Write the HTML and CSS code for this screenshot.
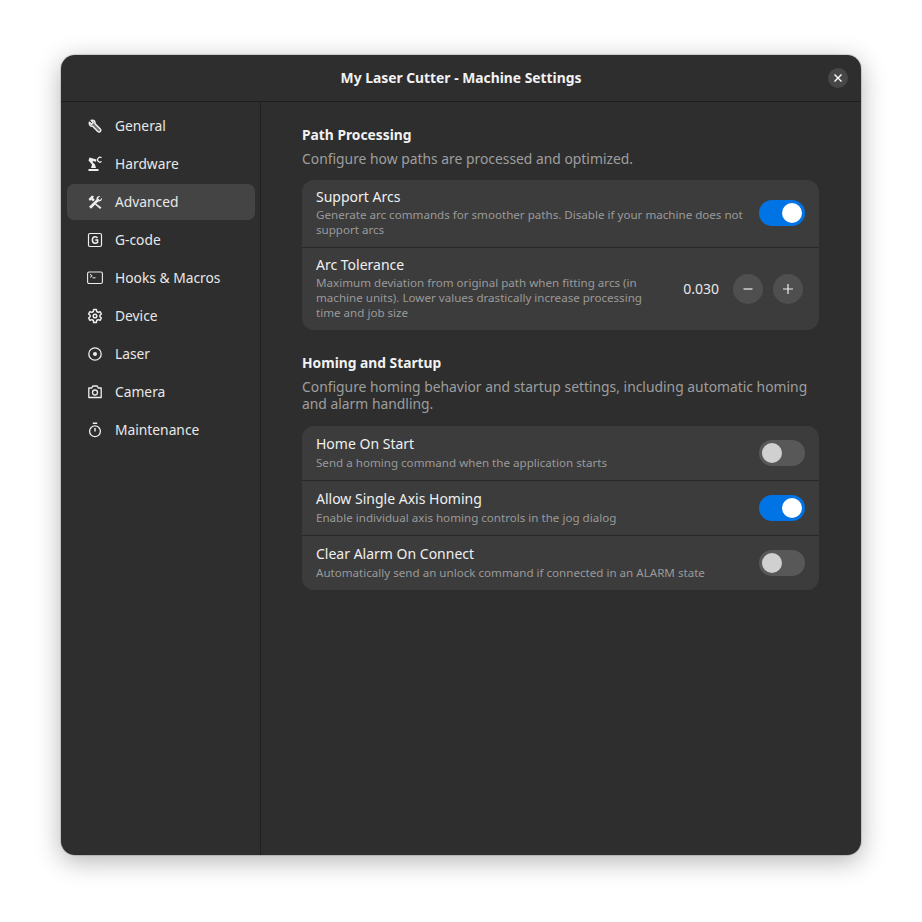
FILE: index.html
```html
<!DOCTYPE html>
<html lang="en">

<head>
    <meta charset="UTF-8">
    <meta name="viewport" content="width=device-width, initial-scale=1.0">
    <title>Machine Settings</title>
    <link rel="stylesheet" href="styles.css">
</head>

<body>
    <div class="window">
        <header class="titlebar">
            <span class="title">My Laser Cutter - Machine Settings</span>
            <button class="close-btn" aria-label="Close">
                <svg width="16" height="16" viewBox="0 0 16 16"><path d="M4.500 4.500l7 7M11.500 4.500l-7 7" stroke="#fff" stroke-width="1.400" fill="none"/></svg>
            </button>
        </header>

        <div class="main">
            <!-- Sidebar -->
            <nav class="sidebar">
                <a class="nav-item">
                    <svg class="nav-icon" viewBox="0 0 16 16"><path d="M2.400 4.200 4.500 6.200 6.200 4.500 4.200 2.400C5.800 1.700 7.700 2.600 8 4.300c.1.500.1 1 0 1.400l5.300 5.300c.7.700.7 1.500.1 2.200l-.4.400c-.7.600-1.500.6-2.200-.1L5.600 8.300C3.600 8.700 1.700 6.800 2.400 4.200z" stroke="#eee" stroke-width="1.500" fill="#eee" fill-opacity=".35" stroke-linejoin="round"/></svg>
                    <span>General</span>
                </a>
                <a class="nav-item">
                    <svg class="nav-icon" viewBox="0 0 16 16"><path d="M1.500 13h10v2h-10zM4 12 5 8.500 1.500 4.500 2.500 1.500 9.500 3.500 9 5.800 6 5 5.500 6 8 8.500 9 12z" fill="#eee"/><path d="M14.500 1.800a2.400 2.400 0 1 0 0 3.800" stroke="#eee" stroke-width="1.300" fill="none"/></svg>
                    <span>Hardware</span>
                </a>
                <a class="nav-item active">
                    <svg class="nav-icon" viewBox="0 0 16 16"><path d="M1.500 5 5 1.500 7 2.500 6 4 7.800 5.800 6 7.500 4.200 5.800 3 7z" fill="#eee"/><path d="M2 12.800 9.500 5.500c-.5-2 1.500-4 3.800-3.500L11 4.300l.7 1 1.300.7L15 3.800c.4 2.300-1.500 4-3.700 3.700L4 14.800z" fill="#eee"/><path d="M9 9.500 14.500 13.500 13 15 8 10.500z" fill="#eee"/></svg>
                    <span>Advanced</span>
                </a>
                <a class="nav-item">
                    <svg class="nav-icon" viewBox="0 0 16 16"><rect x="1.500" y="1.500" width="13" height="13" rx="1.500" stroke="#eee" stroke-width="1.200" fill="none"/><path d="M10.500 6.200C10 5.200 9.200 4.800 8.200 4.800 6.500 4.800 5.400 6.100 5.400 8s1 3.200 2.800 3.200c1 0 1.800-.3 2.400-.8V7.900H8.200" stroke="#eee" stroke-width="1.500" fill="none"/></svg>
                    <span>G-code</span>
                </a>
                <a class="nav-item">
                    <svg class="nav-icon" viewBox="0 0 16 14"><rect x=".6" y="1" width="14.800" height="11.500" rx="1.500" stroke="#eee" stroke-width="1.100" fill="none"/><path d="M3 3.200 5.200 4.800 3 6.300M5.500 6.800h3" stroke="#eee" stroke-width="1" fill="none"/></svg>
                    <span>Hooks &amp; Macros</span>
                </a>
                <a class="nav-item">
                    <svg class="nav-icon" viewBox="0 0 16 16"><path d="M6.700 1.500h2.600l.4 2 1.500.9 1.900-.7 1.300 2.300-1.500 1.300v1.400l1.500 1.300-1.300 2.300-1.900-.7-1.500.9-.4 2H6.700l-.4-2-1.500-.9-1.900.7-1.300-2.300 1.500-1.300V7.300L1.600 6l1.300-2.300 1.900.7 1.500-.9z" stroke="#eee" stroke-width="1.500" fill="none" stroke-linejoin="round"/><circle cx="8" cy="8" r="1.800" stroke="#eee" stroke-width="1.500" fill="none"/></svg>
                    <span>Device</span>
                </a>
                <a class="nav-item">
                    <svg class="nav-icon" viewBox="0 0 16 16"><circle cx="8" cy="8" r="6.200" stroke="#eee" stroke-width="1.300" fill="none"/><circle cx="8" cy="8" r="2" fill="#eee"/></svg>
                    <span>Laser</span>
                </a>
                <a class="nav-item">
                    <svg class="nav-icon" viewBox="0 0 16 16"><path d="M1.800 4h3l1-2h4.400l1 2h3v9.500H1.800z" stroke="#eee" stroke-width="1.300" fill="none" stroke-linejoin="round"/><circle cx="8" cy="8.500" r="2.500" stroke="#eee" stroke-width="1.300" fill="none"/></svg>
                    <span>Camera</span>
                </a>
                <a class="nav-item">
                    <svg class="nav-icon" viewBox="0 0 16 16"><circle cx="8" cy="9.300" r="5.400" stroke="#eee" stroke-width="1.300" fill="none"/><path d="M5.800 1.300h4.400M8 6v3.500" stroke="#eee" stroke-width="1.400" fill="none"/></svg>
                    <span>Maintenance</span>
                </a>
            </nav>

            <!-- Settings page -->
            <section class="content">
                <h2 class="group-title">Path Processing</h2>
                <p class="group-desc">Configure how paths are processed and optimized.</p>
                <div class="card">
                    <div class="row row-tall">
                        <div class="row-text">
                            <div class="row-title">Support Arcs</div>
                            <div class="row-sub">Generate arc commands for smoother paths. Disable if your machine does not support arcs</div>
                        </div>
                        <div class="switch on"><div class="knob"></div></div>
                    </div>
                    <div class="row row-tall">
                        <div class="row-text narrow">
                            <div class="row-title">Arc Tolerance</div>
                            <div class="row-sub">Maximum deviation from original path when fitting arcs (in machine units). Lower values drastically increase processing time and job size</div>
                        </div>
                        <div class="spin">
                            <span class="spin-value">0.030</span>
                            <button class="spin-btn" aria-label="Decrease">
                                <svg width="16" height="16" viewBox="0 0 16 16"><path d="M3.500 8h9" stroke="#eee" stroke-width="1.200"/></svg>
                            </button>
                            <button class="spin-btn" aria-label="Increase">
                                <svg width="16" height="16" viewBox="0 0 16 16"><path d="M3 8h10M8 3v10" stroke="#eee" stroke-width="1.200"/></svg>
                            </button>
                        </div>
                    </div>
                </div>

                <h2 class="group-title second">Homing and Startup</h2>
                <p class="group-desc two-line">Configure homing behavior and startup settings, including automatic homing and alarm handling.</p>
                <div class="card">
                    <div class="row">
                        <div class="row-text">
                            <div class="row-title">Home On Start</div>
                            <div class="row-sub">Send a homing command when the application starts</div>
                        </div>
                        <div class="switch"><div class="knob"></div></div>
                    </div>
                    <div class="row">
                        <div class="row-text">
                            <div class="row-title">Allow Single Axis Homing</div>
                            <div class="row-sub">Enable individual axis homing controls in the jog dialog</div>
                        </div>
                        <div class="switch on"><div class="knob"></div></div>
                    </div>
                    <div class="row">
                        <div class="row-text">
                            <div class="row-title">Clear Alarm On Connect</div>
                            <div class="row-sub">Automatically send an unlock command if connected in an ALARM state</div>
                        </div>
                        <div class="switch"><div class="knob"></div></div>
                    </div>
                </div>
            </section>
        </div>
    </div>
</body>

</html>
```

FILE: styles.css
```css
* {
    box-sizing: border-box;
}

html,
body {
    height: 100%;
}

body {
    margin: 0;
    padding: 55px 61px 67px;
    background-color: #ffffff;
    font-family: "Noto Sans", "Open Sans", sans-serif;
    color: #f0f0f0;
}

.window {
    width: 800px;
    height: 800px;
    background-color: #2e2e2e;
    border-radius: 14px;
    box-shadow: 0 0 0 1px rgba(0, 0, 0, 0.12), 0 6px 26px rgba(0, 0, 0, 0.3);
    display: flex;
    flex-direction: column;
    overflow: hidden;
}

/* Title bar */
.titlebar {
    height: 47px;
    flex: none;
    display: flex;
    align-items: center;
    justify-content: center;
    position: relative;
    border-bottom: 1px solid #1f1f1f;
}

.title {
    font-size: 13.850px;
    font-weight: 700;
    color: #f2f2f2;
    padding-bottom: 2px;
}

.close-btn {
    position: absolute;
    right: 13px;
    top: 13px;
    width: 20px;
    height: 20px;
    padding: 2px;
    border: none;
    border-radius: 50%;
    background-color: #474747;
    display: flex;
}

.main {
    flex: 1;
    display: flex;
    min-height: 0;
}

/* Sidebar */
.sidebar {
    width: 200px;
    flex: none;
    padding: 6px 5px 6px 6px;
    border-right: 1px solid #1f1f1f;
    display: flex;
    flex-direction: column;
    gap: 2px;
}

.nav-item {
    height: 36px;
    display: flex;
    align-items: center;
    gap: 12px;
    padding-left: 20px;
    border-radius: 7px;
    font-size: 13.800px;
    color: #e8e8e8;
}

.nav-item span {
    padding-bottom: 2px;
}

.nav-item.active {
    background-color: #444444;
}

.nav-icon {
    width: 16px;
    height: 16px;
    flex: none;
}

/* Settings page */
.content {
    flex: 1;
    padding: 23px 42px 0 41px;
}

.group-title {
    margin: 0;
    font-size: 13.800px;
    line-height: 20px;
    font-weight: 700;
    color: #f2f2f2;
}

.group-title.second {
    margin-top: 23px;
}

.group-desc {
    margin: 5px 0 13px;
    font-size: 13.870px;
    line-height: 17px;
    color: #9e9e9e;
}

.group-desc.two-line {
    margin-bottom: 14px;
}

.card {
    background-color: #3c3c3c;
    border-radius: 12px;
    overflow: hidden;
}

.row {
    min-height: 55px;
    padding: 8px 14px 9px;
    display: flex;
    align-items: center;
    justify-content: space-between;
    gap: 12px;
    border-top: 1px solid #282828;
}

.row:first-child {
    min-height: 54px;
    border-top: none;
}

.row-text {
    flex: 1;
    min-width: 0;
}

.row-text.narrow {
    flex: none;
    width: 340px;
}

.row-title {
    margin: -1px 0 1px;
    font-size: 14px;
    line-height: 20px;
    color: #f0f0f0;
}

.row-sub {
    font-size: 11.600px;
    line-height: 15px;
    color: #9a9a9a;
}

/* Rows with wrapped text sit a little higher than their controls */
.row-tall .row-text {
    margin: -1px 0 1px;
}

.row-tall .row-title {
    margin: 0;
}

/* Switch */
.switch {
    width: 46px;
    height: 26px;
    flex: none;
    padding: 3px;
    border-radius: 13px;
    background-color: #585858;
    display: flex;
}

.switch.on {
    background-color: #0073e5;
    justify-content: flex-end;
}

.knob {
    width: 20px;
    height: 20px;
    border-radius: 50%;
    background-color: #d0d0d0;
}

.switch.on .knob {
    background-color: #ffffff;
}

/* Spin row */
.spin {
    display: flex;
    align-items: center;
    gap: 10px;
    margin-right: 2px;
}

.spin-value {
    font-size: 14px;
    margin-right: 4px;
    color: #e8e8e8;
}

.spin-btn {
    width: 30px;
    height: 30px;
    padding: 7px;
    border: none;
    border-radius: 50%;
    background-color: #4f4f4f;
    display: flex;
}
```
